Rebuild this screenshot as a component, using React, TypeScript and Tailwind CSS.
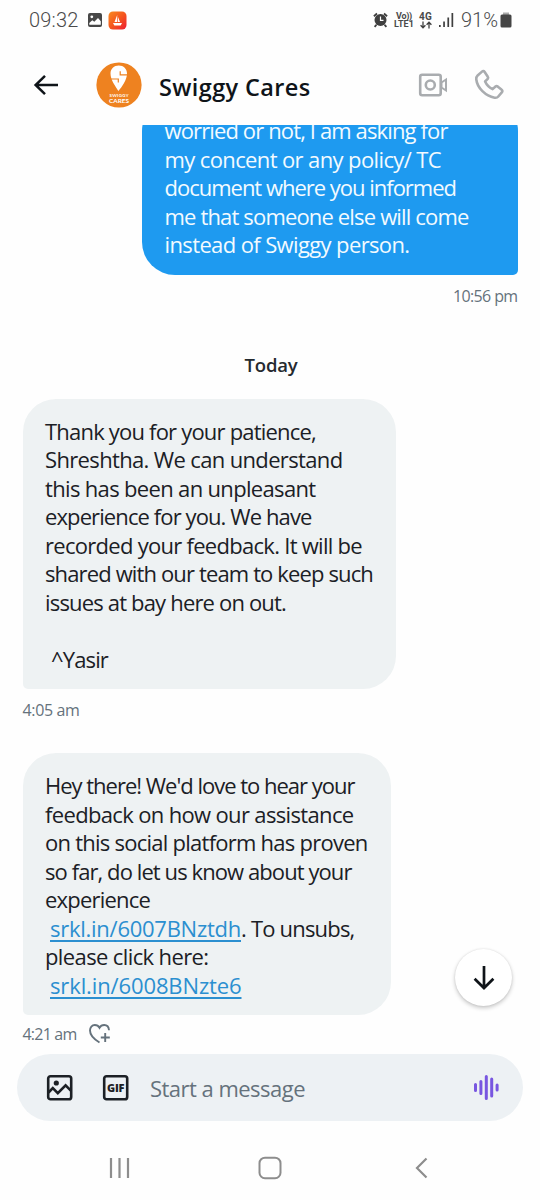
import { useLayoutEffect, useRef, useState } from "react";
import type { ReactNode } from "react";

/** One line of text whose tracking is adjusted so that it spans `width` pixels. */
function Fit({ children, width, className = "" }: { children: string; width: number; className?: string }) {
  const ref = useRef<HTMLSpanElement>(null);
  const [spacing, setSpacing] = useState(0);
  useLayoutEffect(() => {
    if (ref.current) {
      const natural = ref.current.getBoundingClientRect().width;
      setSpacing((width - natural) / children.length);
    }
  }, [children, width]);
  return (
    <span ref={ref} className={`inline-block whitespace-pre ${className}`} style={{ letterSpacing: `${spacing}px` }}>
      {children}
    </span>
  );
}

type LineData = [string, number];

const sent: LineData[] = [
  ["worried or not, I am asking for", 283],
  ["my concent or any policy/ TC", 276.5],
  ["document where you informed", 291.5],
  ["me that someone else will come", 304],
  ["instead of Swiggy person.", 245],
];

const received: LineData[] = [
  ["Thank you for your patience,", 271],
  ["Shreshtha. We can understand", 297.5],
  ["this has been an unpleasant", 270.5],
  ["experience for you. We have", 266.5],
  ["recorded your feedback. It will be", 317],
  ["shared with our team to keep such", 328],
  ["issues at bay here on out.", 241],
];

const survey: LineData[] = [
  ["Hey there! We'd love to hear your", 309.5],
  ["feedback on how our assistance", 308.5],
  ["on this social platform has proven", 322.5],
  ["so far, do let us know about your", 306.5],
  ["experience", 105],
];

function Lines({ items }: { items: LineData[] }) {
  return (
    <>
      {items.map(([text, width]) => (
        <Row key={text}>
          <Fit width={width}>{text}</Fit>
        </Row>
      ))}
    </>
  );
}

function Row({ children }: { children?: ReactNode }) {
  return <div className="flex h-[28.5px]">{children}</div>;
}

const linkClass = "text-[#2b8fd0] underline decoration-[1.5px] underline-offset-[3px]";

function StatusBar() {
  return (
    <div className="flex h-10 items-center pl-[29px] pr-[28px] font-[Roboto,sans-serif] text-[#4a4a4a]">
      <Fit width={49.5} className="text-[20px] leading-[38px] font-light">09:32</Fit>
      <svg className="ml-[8.5px]" width="16" height="16" viewBox="0 0 16 16">
        <rect x="1" y="1" width="14" height="14" rx="2" fill="#474747" />
        <circle cx="4.8" cy="4.8" r="1.4" fill="#fff" />
        <path d="M2.3 12.8V11l3-2.8 2 1.6L11 6l2.8 3.2v3.6z" fill="#fff" />
      </svg>
      <svg className="ml-[5px]" width="19" height="19" viewBox="0 0 19 19">
        <defs>
          <linearGradient id="app" x1="0" y1="0" x2="1" y2="1">
            <stop offset="0" stopColor="#f98b20" />
            <stop offset=".55" stopColor="#f4511e" />
            <stop offset="1" stopColor="#ed1c35" />
          </linearGradient>
        </defs>
        <rect x=".5" y=".5" width="18" height="18" rx="4.5" fill="url(#app)" />
        <path d="M9.2 4v7H6.5zM9.9 5.8 12 11H9.9zM5 12h9l-1.3 2.5H6.3z" fill="#fff" />
      </svg>
      <div className="flex-1" />
      <svg className="-ml-px mr-px" width="15" height="16" viewBox="0 0 15 16" fill="none" stroke="#3f3f3f">
        <circle cx="7.5" cy="8" r="6" fill="#3f3f3f" stroke="none" />
        <path d="M.9 4.2 4 1.5M14.1 4.2 11 1.5M3.4 12.8l-1.8 2M11.6 12.8l1.8 2" strokeWidth="1.8" />
        <path d="M7.5 4.4V8.4h3" stroke="#fff" strokeWidth="1.2" />
      </svg>
      <div className="ml-[5px] flex w-[20px] flex-col items-center text-[9px] leading-[8.5px] font-bold">
        <Fit width={16}>Vo))</Fit>
        <Fit width={20}>LTE1</Fit>
      </div>
      <div className="ml-[5px] flex w-[13px] flex-col items-center">
        <Fit width={13} className="text-[10px] leading-[9px] font-bold">4G</Fit>
        <svg width="12" height="8" viewBox="0 0 12 8" fill="none" stroke="#3f3f3f" strokeWidth="1.3">
          <path d="M3 .5v6M.6 4.2 3 6.8l2.4-2.6M9 7.5v-6M6.6 3.8 9 1.2l2.4 2.6" />
        </svg>
      </div>
      <svg className="ml-[7px] mr-px" width="15" height="16" viewBox="0 0 15 16" fill="#3f3f3f">
        <path d="M0 13h1.7v2H0zM4.2 9.5h1.7V15H4.2zM8.4 5.5h1.7V15H8.4zM12.5 1h1.7v14h-1.7z" />
      </svg>
      <Fit width={37} className="ml-[6px] text-[20px] leading-[38px] font-light">91%</Fit>
      <svg className="ml-[2px]" width="12" height="16" viewBox="0 0 12 16">
        <path d="M3 .5h6v3H3z" fill="#aaa" />
        <rect x=".5" y="2.5" width="11" height="13" rx="1.5" fill="#454545" />
      </svg>
    </div>
  );
}

function Avatar() {
  return (
    <svg className="ml-[37px]" width="46" height="46" viewBox="0 0 46 46">
      <circle cx="23" cy="23" r="22.6" fill="#ee8220" />
      <path d="M22.4 29C19.5 24.5 14.5 18 14.5 11.6 14.5 7 18 3.6 22.8 3.6S31 7 31 11.6C31 18 26 25 22.4 29z" fill="#fff" />
      <path d="M31.500 12.900h-7.300V9.200M14 17h8.300v3.600" stroke="#ee8220" strokeWidth="1.2" fill="none" />
      <text x="23" y="34.6" textAnchor="middle" textLength="19" fontSize="4.4" fontWeight="700" fontFamily="Lato, sans-serif" fill="#fff">SWIGGY</text>
      <text x="23" y="41.3" textAnchor="middle" textLength="20" fontSize="6.4" fontWeight="700" fontFamily="Lato, sans-serif" fill="#fff">CARES</text>
    </svg>
  );
}

function Header() {
  return (
    <div className="flex h-[85px] items-start pt-[22px] pl-[33px] pr-[35px]">
      <svg className="mt-[11px]" width="26" height="24" viewBox="0 0 26 24" fill="none" stroke="#0f1419" strokeWidth="2.5">
        <path d="M25 12H3M12 2.8 2.6 12l9.4 9.2" />
      </svg>
      <Avatar />
      <Fit width={151.5} className="ml-[17px] mt-[9px] text-[23.5px] leading-[32px] font-semibold text-[#0f1419]">Swiggy Cares</Fit>
      <div className="flex-1" />
      <svg className="mt-[11px]" width="30" height="24" viewBox="0 0 30 24" fill="none" stroke="#a9acaf" strokeWidth="2.6">
        <rect x="2.2" y="1.7" width="20.5" height="20.5" rx="2" />
        <circle cx="12.3" cy="12" r="4.5" />
        <path d="M23.5 9.5 28 6.5v11l-4.500-3z" strokeWidth="2" />
      </svg>
      <svg className="ml-[26px] mt-[7px]" width="31" height="32" viewBox="0 0 31 32" fill="none" stroke="#a9acaf" strokeWidth="2.6" strokeLinejoin="round">
        <path d="M3.600 6.500 8 2.600c.8-.7 1.900-.6 2.500.2l3.300 4.900c.5.700.4 1.500-.1 2.200l-2.600 2.600c1.500 3.400 3.900 5.900 7.500 7.600l2.900-2.600c.6-.5 1.500-.5 2.100-.1l4.100 3.300c.8.600.9 1.700.3 2.400l-3.700 4.400c-.9 1.100-2.300 1.500-3.700 1.200C11.500 27 3.300 19 2.300 10.500c-.2-1.600.2-3 1.300-4z" />
      </svg>
    </div>
  );
}

function Composer() {
  return (
    <div className="mx-[17px] flex h-[67px] shrink-0 items-center rounded-full bg-[#edf1f4] pl-[29px] pr-[23px]">
      <svg width="27" height="27" viewBox="0 0 27 27" fill="none" stroke="#1c2025" strokeWidth="2.6">
        <rect x="2.2" y="2.2" width="23" height="23" rx="2.3" />
        <circle cx="10.3" cy="9" r="2.6" fill="#1c2025" stroke="none" />
        <path d="m2.500 18.500 4.300-4.300 5 5 7.800-7.800 5.500 5.500" />
      </svg>
      <svg className="ml-[29px]" width="27" height="27" viewBox="0 0 27 27">
        <rect x="2.2" y="2.2" width="23" height="23" rx="2.3" fill="none" stroke="#1c2025" strokeWidth="2.6" />
        <text x="13.7" y="17.6" textAnchor="middle" textLength="17.5" fontSize="11" fontWeight="800" fontFamily="Open Sans, sans-serif" fill="#1c2025">GIF</text>
      </svg>
      <Fit width={155} className="ml-[21px] mt-px text-[22px] leading-[30px] text-[#65727c]">Start a message</Fit>
      <div className="flex-1" />
      <svg className="-mt-px" width="28" height="28" viewBox="0 0 28 28" stroke="#7856e0" strokeWidth="3" strokeLinecap="round">
        <path d="M3.500 11.500v6M8.900 8.500v12M14.300 3.500v22M19.700 6v17M25.100 12v5" />
      </svg>
    </div>
  );
}

function Navigation() {
  return (
    <div className="flex h-[79px] shrink-0 items-center pt-[15px] pl-[108px]">
      <svg width="23" height="22" viewBox="0 0 23 22" stroke="#8d8d8d" strokeWidth="2.2">
        <path d="M3 1v20M11.500 1v20M20 1v20" />
      </svg>
      <svg className="ml-[127px]" width="24" height="24" viewBox="0 0 24 24" fill="none" stroke="#8d8d8d" strokeWidth="2">
        <rect x="1.5" y="1.7" width="21" height="20.5" rx="5.5" />
      </svg>
      <svg className="ml-[132px]" width="15" height="22" viewBox="0 0 15 22" fill="none" stroke="#8d8d8d" strokeWidth="2.2">
        <path d="M12.500 1.500 3 11l9.500 9.500" />
      </svg>
    </div>
  );
}

export default function App() {
  return (
    <div className="relative flex h-[1200px] w-[540px] flex-col overflow-hidden bg-[#fefefe] font-['Open_Sans',sans-serif]">
      <StatusBar />
      <Header />
      <main className="flex h-[929px] shrink-0 flex-col overflow-hidden px-[22.5px] text-[22px] leading-[28.5px] text-[#1b2025]">
        <div className="-mt-[27px] w-[375.5px] shrink-0 self-end rounded-[33px] rounded-br-[5px] bg-[#1e9af0] pt-[18px] pb-[16.5px] pl-[22.5px] text-[#f3faff]">
          <Lines items={sent} />
        </div>
        <div className="mt-[9.5px] flex h-[22px] justify-end text-[16px] leading-[22px] text-[#65727c]">
          <Fit width={64.5}>10:56 pm</Fit>
        </div>
        <div className="mt-[46.5px] flex h-[24px] justify-center pl-[2px] text-[18.5px] leading-[24px] font-semibold text-[#252a2f]">
          <Fit width={53}>Today</Fit>
        </div>
        <div className="mt-[21.7px] w-[373.5px] shrink-0 rounded-[33px] rounded-bl-[5px] bg-[#eef2f3] pt-[18px] pb-[16px] pl-[22.5px]">
          <Lines items={received} />
          <Row />
          <Row>
            <Fit width={57} className="ml-[6px]">^Yasir</Fit>
          </Row>
        </div>
        <div className="mt-[10px] flex h-[22px] text-[16px] leading-[22px] text-[#65727c]">
          <Fit width={57}>4:05 am</Fit>
        </div>
        <div className="mt-[32px] w-[368px] shrink-0 rounded-[33px] rounded-bl-[5px] bg-[#eef2f3] pt-[18px] pb-[16px] pl-[22.5px]">
          <Lines items={survey} />
          <Row>
            <Fit width={191} className={`ml-[5px] ${linkClass}`}>srkl.in/6007BNztdh</Fit>
            <Fit width={113.5}>. To unsubs,</Fit>
          </Row>
          <Row>
            <Fit width={163.5}>please click here:</Fit>
          </Row>
          <Row>
            <Fit width={191.5} className={`ml-[5px] ${linkClass}`}>srkl.in/6008BNzte6</Fit>
          </Row>
        </div>
        <div className="mt-[8px] flex h-[22px] text-[16px] leading-[22px] text-[#65727c]">
          <Fit width={54}>4:21 am</Fit>
          <svg className="ml-[11.5px] -mt-[0.5px]" width="23" height="22" viewBox="0 0 23 22" fill="none" stroke="#65727c" strokeWidth="1.9">
            <path d="M11.500 19.500C6 16.200 2 12 2 7.500 2 4.200 4 2 6.800 2c2 0 3.700 1 4.700 2.800C12.500 3 14.200 2 16.200 2c2.600 0 4.600 2 4.800 5.200M17.200 10v9M12.800 14.500h9" />
          </svg>
        </div>
      </main>
      <Composer />
      <Navigation />
      <button className="absolute top-[949px] left-[455px] flex size-[57px] items-center justify-center rounded-full bg-white shadow-[0_2px_4px_rgba(0,0,0,0.22),0_0_2px_rgba(0,0,0,0.1)]" aria-label="Down">
        <svg width="22" height="26" viewBox="0 0 22 26" fill="none" stroke="#0f1419" strokeWidth="2.7">
          <path d="M11 1v22M1.600 13.700 11 23l9.400-9.300" />
        </svg>
      </button>
    </div>
  );
}
